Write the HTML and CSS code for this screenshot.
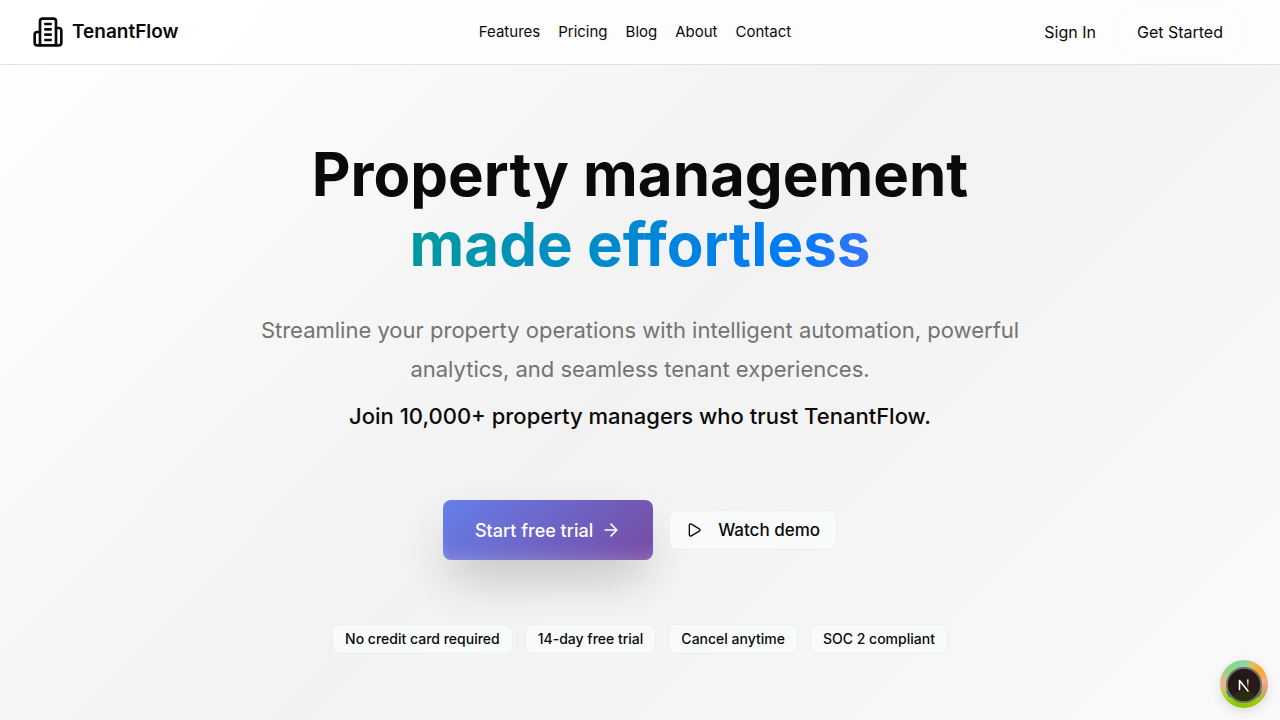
FILE: index.html
```html
<!DOCTYPE html>
<html lang="en">
<head>
<meta charset="utf-8">
<meta name="viewport" content="width=device-width, initial-scale=1">
<title>TenantFlow</title>
<link rel="stylesheet" href="styles.css">
</head>
<body>
<header class="header">
  <a class="brand" href="#">
    <svg class="brand-icon" viewBox="0 0 24 24" aria-hidden="true"><path d="M6 22V4a2 2 0 0 1 2-2h8a2 2 0 0 1 2 2v18Z"/><path d="M6 12H4a2 2 0 0 0-2 2v6a2 2 0 0 0 2 2h2"/><path d="M18 9h2a2 2 0 0 1 2 2v9a2 2 0 0 1-2 2h-2"/><path d="M10 6h4M10 10h4M10 14h4M10 18h4"/></svg>
    <span>TenantFlow</span>
  </a>
  <nav class="nav" aria-label="Main">
    <a href="#">Features</a>
    <a href="#">Pricing</a>
    <a href="#">Blog</a>
    <a href="#">About</a>
    <a href="#">Contact</a>
  </nav>
  <div class="account">
    <a class="sign-in" href="#">Sign In</a>
    <a class="get-started" href="#">Get Started</a>
  </div>
</header>
<main class="hero">
  <h1 class="title">Property management <span class="title-accent">made effortless</span></h1>
  <p class="lead">Streamline your property operations with intelligent automation, powerful analytics, and seamless tenant experiences.</p>
  <p class="trust">Join 10,000+ property managers who trust TenantFlow.</p>
  <div class="actions">
    <button class="button-primary" type="button">Start free trial
      <svg class="icon-arrow" viewBox="0 0 24 24" aria-hidden="true"><path d="M5 12h14M12 5l7 7-7 7"/></svg>
    </button>
    <button class="button-secondary" type="button">
      <svg class="icon-play" viewBox="0 0 24 24" aria-hidden="true"><path d="M5 5a2 2 0 0 1 3.008-1.728l11.997 6.998a2 2 0 0 1 .003 3.458l-12 7A2 2 0 0 1 5 19z"/></svg>
      Watch demo
    </button>
  </div>
  <ul class="perks">
    <li>No credit card required</li>
    <li>14-day free trial</li>
    <li>Cancel anytime</li>
    <li>SOC 2 compliant</li>
  </ul>
</main>
<button class="dev-badge" type="button" aria-label="Open developer tools">
  <svg viewBox="0 0 48 48" aria-hidden="true">
    <defs>
      <linearGradient id="stem" x1="0" y1="0" x2="0" y2="1"><stop offset="0" stop-color="#fff"/><stop offset="1" stop-color="#fff" stop-opacity="0.1"/></linearGradient>
      <clipPath id="disc"><circle cx="24" cy="25" r="16"/></clipPath>
    </defs>
    <path d="M14 9q10-6 19 0l-2 3H17z" fill="#80d9e4"/>
    <path d="M33 8l9 9-3 5-8-11z" fill="#f99a10"/>
    <path d="M6 31h5v6H9zM42 31h-5v6h2z" fill="#1587a0"/>
    <circle cx="24" cy="25" r="17" fill="#211d1b" stroke="#687064"/>
    <g clip-path="url(#disc)">
      <path d="M8 7h32v25H8z" fill="#2b1819"/>
      <path d="M9 20q3-6 6-4q4-5 6-1q5 0 4 5q-3-3-6-2q-3 5-1 14h-3q2-9 1-13q-5 1-6 6z" fill="#171b16"/>
      <path d="M11 41q3-10 13-11q10 1 14 11z" fill="#282d0c"/>
    </g>
    <path d="M19.500 29.500V20.500L28 31" fill="none" stroke="#fff" stroke-width="1.600"/>
    <path d="M27 19.500h1.600v8H27z" fill="url(#stem)"/>
  </svg>
</button>
</body>
</html>
```
FILE: styles.css
```css
* {
  box-sizing: border-box;
}

body {
  margin: 0;
  min-height: 100vh;
  font-family: Inter, "Liberation Sans", sans-serif;
  font-size: 16px;
  line-height: 24px;
  color: #0a0a0a;
  background: linear-gradient(135deg, #ffffff, #f2f2f2 50%, #fafafa);
}

a {
  color: inherit;
  text-decoration: none;
}

svg {
  fill: none;
  stroke: currentColor;
  stroke-width: 2;
  stroke-linecap: round;
  stroke-linejoin: round;
}

.header {
  display: grid;
  grid-template-columns: 1fr auto 1fr;
  align-items: center;
  height: 65px;
  padding: 0 32px;
  background: rgba(255, 255, 255, 0.8);
  border-bottom: 1px solid #e2e2e2;
}

.brand {
  display: flex;
  align-items: center;
  gap: 8px;
  font-size: 19px;
  font-weight: 600;
}

.brand-icon {
  width: 32px;
  height: 32px;
}

.nav {
  display: flex;
  gap: 18px;
  margin-right: 10px;
  font-size: 15px;
}

.account {
  display: flex;
  justify-content: flex-end;
  align-items: center;
  gap: 16px;
}

.get-started {
  padding: 12px 24px;
  border: 1px solid #fafafa;
  border-radius: 24px;
}

.hero {
  display: flex;
  flex-direction: column;
  align-items: center;
  padding: 74px 24px 64px;
  text-align: center;
}

.title {
  margin: 0 0 32px;
  font-size: 60px;
  font-weight: 700;
  line-height: 70px;
}

.title-accent {
  display: block;
  width: fit-content;
  margin: 0 auto;
  color: transparent;
  background: linear-gradient(100deg, #009b9b, #0083e0 60%, #007bf5 82%, #3b72ff);
  background-clip: text;
  -webkit-background-clip: text;
}

.lead {
  max-width: 768px;
  margin: 0 0 8px;
  font-size: 22px;
  line-height: 39px;
  color: #737373;
}

.trust {
  margin: 0;
  font-size: 22px;
  font-weight: 500;
  line-height: 39px;
}

.actions {
  display: flex;
  align-items: center;
  gap: 16px;
  margin: 64px 0;
}

.button-primary,
.button-secondary {
  display: flex;
  align-items: center;
  font-family: inherit;
  font-weight: 500;
  cursor: pointer;
}

.button-primary {
  gap: 8px;
  height: 60px;
  padding: 0 32px;
  font-size: 18px;
  color: #ffffff;
  border: 0;
  border-radius: 8px;
  background: linear-gradient(135deg, #667eea, #764ba2);
  box-shadow: 0 24px 48px -8px rgba(0, 0, 0, 0.22), inset 1px -14px 14px -8px rgba(255, 255, 255, 0.16);
}

.icon-arrow {
  width: 20px;
  height: 20px;
}

.button-secondary {
  gap: 16px;
  height: 40px;
  padding: 0 16px;
  font-size: 17px;
  color: #0a0a0a;
  background: #f9fbfa;
  border: 1px solid #efefef;
  border-radius: 8px;
}

.icon-play {
  width: 16px;
  height: 16px;
}

.perks {
  display: flex;
  flex-wrap: wrap;
  justify-content: center;
  gap: 12px;
  margin: 0;
  padding: 0;
  list-style: none;
  font-size: 14px;
  font-weight: 500;
  line-height: 20px;
}

.perks li {
  padding: 4px 12px;
  background: #f9fbfa;
  border: 1px solid #efefef;
  border-radius: 8px;
}

.dev-badge {
  position: fixed;
  right: 12px;
  bottom: 12px;
  width: 48px;
  height: 48px;
  padding: 0;
  border: 0;
  border-radius: 50%;
  background: conic-gradient(#83d9a0, #e9bd59 25deg, #f8a62d 50deg, #f5b08a 80deg, #dfa16e 105deg, #a4c60d 145deg, #82c900 200deg, #b5cf35 240deg, #efb494 270deg, #93d57c 310deg, #83d9a0);
  box-shadow: 0 4px 12px rgba(0, 0, 0, 0.12);
}

.dev-badge svg {
  display: block;
  width: 48px;
  height: 48px;
  stroke: none;
}
```
